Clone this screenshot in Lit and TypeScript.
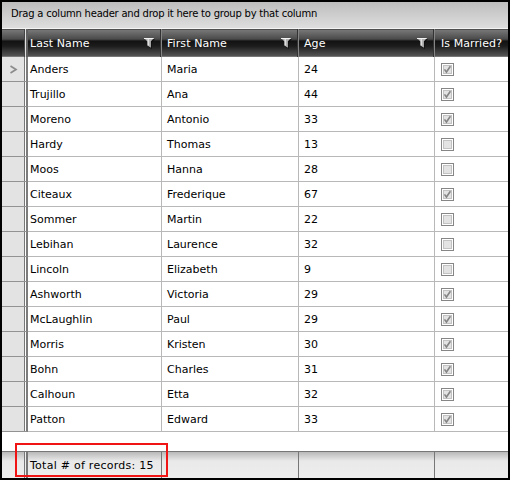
import { LitElement, html, css, svg } from "lit";
import { customElement } from "lit/decorators.js";

type Person = [last: string, first: string, age: number, married: boolean];

const PEOPLE: Person[] = [
  ["Anders", "Maria", 24, true],
  ["Trujillo", "Ana", 44, true],
  ["Moreno", "Antonio", 33, true],
  ["Hardy", "Thomas", 13, false],
  ["Moos", "Hanna", 28, false],
  ["Citeaux", "Frederique", 67, true],
  ["Sommer", "Martin", 22, false],
  ["Lebihan", "Laurence", 32, false],
  ["Lincoln", "Elizabeth", 9, false],
  ["Ashworth", "Victoria", 29, true],
  ["McLaughlin", "Paul", 29, true],
  ["Morris", "Kristen", 30, true],
  ["Bohn", "Charles", 31, true],
  ["Calhoun", "Etta", 32, true],
  ["Patton", "Edward", 33, true],
];

const funnel = html`<svg class="funnel" width="12" height="13" viewBox="0 0 12 13">
  <path d="M2.5 2H12L8.8 5.5V12L5.6 10V6z" fill="#0c0c0c" opacity=".75" />
  <path d="M1 1h10L7.9 4.2V10.8L4.4 8.4V4.4z" fill="#b4b4b4" />
  <path d="M1 1.5h9.6M5.2 2v6.4" stroke="#f2f2f2" fill="none" />
</svg>`;

const checkbox = (on: boolean) => html`<svg class="box" width="13" height="13" viewBox="0 0 13 13">
  <rect x=".5" y=".5" width="12" height="12" fill="#fff" stroke="#868686" />
  <rect x="2.5" y="2.5" width="8" height="8" fill="#e3e3e3" stroke="#c2c2c2" />
  ${on ? svg`<path d="M3.5 6.4L5.4 9L9.4 3.2" fill="none" stroke="#858585" stroke-width="1.6" />` : ""}
</svg>`;

@customElement("app-root")
export class AppRoot extends LitElement {
  static styles = css`
    :host {
      display: block;
      position: relative;
      box-sizing: border-box;
      width: 510px;
      height: 480px;
      border: 2px solid #000;
      background: #fff;
      color: #000;
      font: 11px/22px "DejaVu Sans", Verdana, sans-serif;
      overflow: hidden;
      white-space: nowrap;
    }
    .group {
      height: 27px;
      padding-left: 9px;
      box-sizing: border-box;
      background: linear-gradient(#bdbdbd, #dedede);
      border-bottom: 1px solid #f4f4f4;
      font-size: 10px;
      line-height: 23px;
      letter-spacing: -0.225px;
    }
    .row {
      display: grid;
      grid-template-columns: 26px 134px 137px 136px 1fr;
      grid-template-rows: 100%;
      height: 25px;
    }
    .row > div {
      box-sizing: border-box;
      border-right: 1px solid #b8b8b8;
      border-bottom: 1px solid #b8b8b8;
      padding: 2px 0 0 5px;
    }
    .row > div:nth-child(2) { padding-left: 2px; }
    .row > div:last-child { border-right: 0; padding-left: 6px; }
    .row > .mark {
      display: flex;
      align-items: center;
      padding: 0 0 0 7px;
      border-right: 2px solid #7c7c7c;
      border-bottom-color: #929292;
      background: linear-gradient(90deg, #e3e3e3 22px, #777 22px 23px, #fff 23px);
    }
    .row.head {
      height: 28px;
      color: #fff;
      line-height: 26px;
      letter-spacing: 0.08px;
      background: linear-gradient(#505050 0 1px, #777 1px, #4b4b4b 10px, #353535 11px, #121212 12px, #1c1c1c 17px, #545454 27px, #777 27px);
    }
    .row.head > div {
      display: flex;
      border-bottom: 0;
      border-right-color: #858585;
      box-shadow: inset -1px 0 #333;
    }
    .row.head > .mark {
      border-right-color: #606060;
      background: linear-gradient(90deg, transparent 22px, #444 22px 23px, #e0e0e0 23px);
      box-shadow: none;
    }
    .row.head > div:last-child { box-shadow: none; }
    .funnel { margin: 6px 6px 0 auto; }
    .box { display: block; margin-top: 4px; }
    .blank { height: 19px; }
    .row.foot {
      height: 27px;
      line-height: 24px;
      letter-spacing: 0.26px;
      border-top: 1px solid #777;
      box-sizing: border-box;
      background: linear-gradient(#b9b9b9, #e9e9e9 9px, #eee);
    }
    .row.foot > div { border-bottom: 0; border-right-color: #777; }
    .row.foot > .mark { background: linear-gradient(90deg, transparent 22px, #777 22px 23px, #eee 23px); }
    .highlight {
      position: absolute;
      left: 13px;
      top: 441px;
      width: 153px;
      height: 34px;
      box-sizing: border-box;
      border: 2px solid #f01414;
    }
  `;

  render() {
    return html`
      <div class="group">Drag a column header and drop it here to group by that column</div>
      <div class="row head">
        <div class="mark"></div>
        <div>Last Name${funnel}</div>
        <div>First Name${funnel}</div>
        <div>Age${funnel}</div>
        <div>Is Married?</div>
      </div>
      ${PEOPLE.map(
        ([last, first, age, married], i) => html`<div class="row">
          <div class="mark">
            ${i === 0
              ? html`<svg width="9" height="9" viewBox="0 0 9 9"><path d="M1.5 1L7 4.5L1.5 8" fill="none" stroke="#8b8b8b" stroke-width="1.7" /></svg>`
              : ""}
          </div>
          <div>${last}</div>
          <div>${first}</div>
          <div>${age}</div>
          <div>${checkbox(married)}</div>
        </div>`
      )}
      <div class="blank"></div>
      <div class="row foot">
        <div class="mark"></div>
        <div>Total # of records: ${PEOPLE.length}</div>
        <div></div>
        <div></div>
        <div></div>
      </div>
      <div class="highlight"></div>
    `;
  }
}
